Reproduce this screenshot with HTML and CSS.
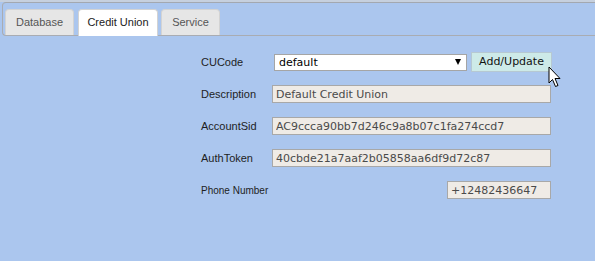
FILE: index.html
```html
<!DOCTYPE html>
<html>
<head>
<meta charset="utf-8">
<title>Credit Union</title>
<link rel="stylesheet" href="styles.css">
</head>
<body>
<div id="tabs">
	<ul class="tabnav">
		<li class="tab tab-db">Database</li>
		<li class="tab tab-cu tab-active">Credit Union</li>
		<li class="tab tab-svc">Service</li>
	</ul>

	<form class="panel" action="#" method="post">
		<div class="row">
			<label for="cucode">CUCode</label>
			<div class="controls">
				<span class="select-wrap">
					<select id="cucode" name="cucode">
						<option value="default">default</option>
					</select>
				</span>
				<span class="button-wrap">
					<input type="button" class="btn" value="Add/Update">
					<svg class="cursor" width="14" height="22" viewBox="0 0 14 22">
						<path d="M1 1 L1 17 L4.5 13.5 L7.5 20.5 L10 19.5 L7 12.5 L12 12.5 Z" fill="#fff" stroke="#000" stroke-width="1" stroke-linejoin="miter"/>
					</svg>
				</span>
			</div>
		</div>
		<div class="row">
			<label for="description">Description</label>
			<input type="text" id="description" class="field" value="Default Credit Union" disabled>
		</div>
		<div class="row">
			<label for="accountsid">AccountSid</label>
			<input type="text" id="accountsid" class="field" value="AC9ccca90bb7d246c9a8b07c1fa274ccd7" disabled>
		</div>
		<div class="row">
			<label for="authtoken">AuthToken</label>
			<input type="text" id="authtoken" class="field" value="40cbde21a7aaf2b05858aa6df9d72c87" disabled>
		</div>
		<div class="row">
			<label for="phone" class="small">Phone Number</label>
			<input type="text" id="phone" class="field field-phone" value="+12482436647" disabled>
		</div>
	</form>
</div>
</body>
</html>
```

FILE: styles.css
```css
html,body,form,ul,li,label,input,select {
	margin:0;
	padding:0;
}
body {
	background-color:#abc6ee;
	font-family:"Liberation Sans", Arial, sans-serif;
	font-size:11px;
	color:#1e1e1e;
}
#tabs {
	border-top:2px solid #c6d0de;
	height:259px;
}
.tabnav {
	list-style:none;
	display:flex;
	align-items:flex-end;
	height:32px;
	margin-left:2px;
	padding:0 0 0 2px;
	border:1px solid #a9acb2;
	border-top-color:#a3a8b0;
	border-right:0;
	border-radius:4px 0 0 4px;
	box-sizing:content-box;
}
.tab {
	box-sizing:border-box;
	height:26px;
	line-height:24px;
	text-align:center;
	background-color:#e6e6e6;
	border:1px solid #d3d3d3;
	border-bottom:0;
	border-radius:4px 4px 0 0;
	color:#555;
	font-size:11px;
}
.tab-db {
	width:69px;
}
.tab-cu {
	width:80px;
	margin-left:4px;
}
.tab-svc {
	width:59px;
	margin-left:3px;
}
.tab-active {
	background-color:#fff;
	color:#212121;
	height:27px;
	padding-bottom:1px;
	margin-bottom:-1px;
}
.panel {
	padding-top:10px;
	padding-left:201px;
}
.row {
	display:grid;
	grid-template-columns:71px 279px;
	align-items:center;
	height:32px;
}
.row label.small {
	font-size:10px;
}
.controls {
	display:flex;
	align-items:center;
	gap:4px;
	padding-left:2px;
}
.select-wrap {
	position:relative;
	display:block;
}
.select-wrap select {
	-webkit-appearance:none;
	appearance:none;
	display:block;
	width:193px;
	height:17px;
	border:1px solid #a5a5a5;
	background-color:#fff;
	font-family:"DejaVu Sans", Verdana, sans-serif;
	font-size:11px;
	color:#000;
	padding:0 4px;
	border-radius:0;
}
.select-wrap::after {
	content:"";
	position:absolute;
	right:6px;
	top:5px;
	border-left:3px solid transparent;
	border-right:3px solid transparent;
	border-top:6px solid #000;
}
.button-wrap {
	position:relative;
	display:block;
}
.btn {
	display:block;
	width:81px;
	height:20px;
	margin-top:-1px;
	border:1px solid #b6c8d2;
	background-color:#cdeae8;
	font-family:"DejaVu Sans", Verdana, sans-serif;
	font-size:11px;
	color:#111;
}
.cursor {
	position:absolute;
	left:77px;
	top:13px;
}
.field {
	display:block;
	width:279px;
	height:18px;
	box-sizing:border-box;
	border:1px solid #a8a8a8;
	background-color:#efebe6;
	font-family:"DejaVu Sans", Verdana, sans-serif;
	font-size:11px;
	color:#4a4a4a;
	padding:0 3px;
	-webkit-text-fill-color:#4a4a4a;
	opacity:1;
}
.field-phone {
	width:104px;
	justify-self:end;
}
```
